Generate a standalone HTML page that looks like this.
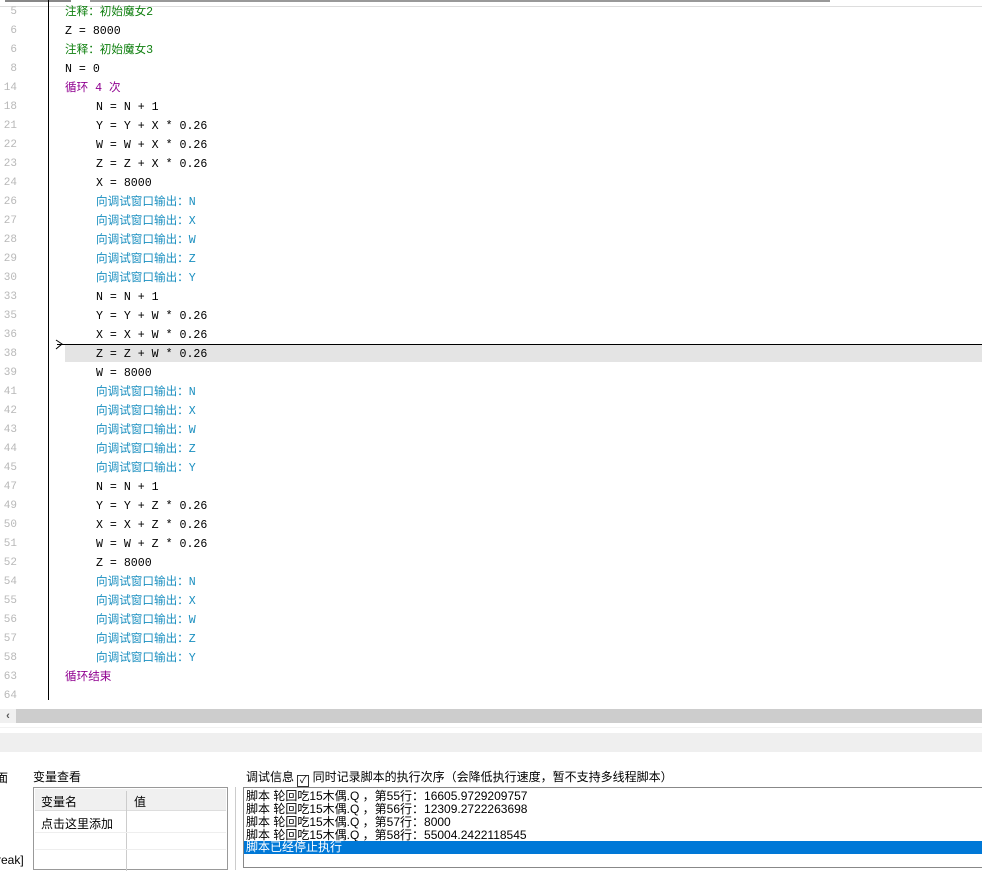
<!DOCTYPE html>
<html><head><meta charset="utf-8"><style>
*{margin:0;padding:0;box-sizing:border-box}
body{width:982px;height:870px;background:#fff;position:relative;overflow:hidden;font-family:"Liberation Sans","Noto Sans CJK SC",sans-serif}
.ln{position:absolute;left:0;width:17px;text-align:right;font:11px "Liberation Mono","Noto Sans CJK SC",monospace;color:#b8b8b8;height:19px;line-height:19px}
.c{position:absolute;font:11.6px "Liberation Mono","Noto Sans CJK SC",monospace;height:19px;line-height:19px;color:#000;white-space:pre}
.g{color:#108010}.p{color:#900090}.b{color:#1a8fc0}
.abs{position:absolute}
.t{font-size:12px;line-height:13px;white-space:pre}
</style></head><body>
<div class="abs" style="left:5px;top:0;width:66px;height:2px;background:#888"></div>
<div class="abs" style="left:90px;top:0;width:740px;height:2px;background:#999"></div>
<div class="abs" style="left:0;top:6px;width:982px;height:1px;background:#ddd"></div>
<div class="abs" style="left:65px;top:344px;width:917px;height:18px;background:#e4e4e4"></div>
<div class="abs" style="left:57px;top:344px;width:925px;height:1px;background:#000"></div>
<svg class="abs" style="left:55px;top:339px" width="10" height="12"><path d="M1 1 L7 5 L1 10" fill="none" stroke="#000" stroke-width="1"/></svg>
<div class="abs" style="left:48px;top:0;width:1px;height:700px;background:#000"></div>
<div id="code"></div>
<div class="abs" style="left:0;top:709px;width:982px;height:14px;background:#cdcdcd"></div>
<div class="abs" style="left:0;top:709px;width:16px;height:14px;background:#f0f0f0;font-size:11px;line-height:14px;text-align:center;color:#555;font-weight:bold">&lsaquo;</div>
<div class="abs" style="left:0;top:727px;width:982px;height:1px;background:#f2f2f2"></div>
<div class="abs" style="left:0;top:733px;width:982px;height:19px;background:#efefef"></div>
<div class="abs" style="left:-4px;top:769px;font-size:12px">面</div>
<div class="abs" style="left:-3px;top:853px;font-size:12px">reak]</div>
<div class="abs" style="left:33px;top:768px;font-size:12px">变量查看</div>
<div class="abs" style="left:33px;top:787px;width:195px;height:83px;border:1px solid #999;background:#fff">
 <div class="abs" style="left:1px;top:1px;width:191px;height:22px;background:#f0f0f0;border-bottom:1px solid #ddd"></div>
 <div class="abs" style="left:92px;top:3px;width:1px;height:80px;background:#ccc"></div>
 <div class="abs" style="left:7px;top:5px;font-size:12px">变量名</div>
 <div class="abs" style="left:100px;top:5px;font-size:12px">值</div>
 <div class="abs" style="left:7px;top:27px;font-size:12px">点击这里添加</div>
 <div class="abs" style="left:1px;top:44px;width:191px;height:1px;background:#eee"></div>
 <div class="abs" style="left:1px;top:61px;width:191px;height:1px;background:#eee"></div>
</div>
<div class="abs" style="left:235px;top:787px;width:1px;height:83px;background:#ccc"></div>
<div class="abs" style="left:246px;top:768px;font-size:12px;white-space:nowrap">调试信息 <span style="display:inline-block;width:12px;height:12px;border:1px solid #333;vertical-align:-2px;font-size:10px;line-height:10px;text-align:center">✓</span> 同时记录脚本的执行次序（会降低执行速度，暂不支持多线程脚本）</div>
<div class="abs" style="left:243px;top:787px;width:740px;height:81px;border:1px solid #888;background:#fff">
 <div class="abs t" style="left:2px;top:2px">脚本 轮回吃15木偶.Q ，第55行：16605.9729209757</div>
 <div class="abs t" style="left:2px;top:15px">脚本 轮回吃15木偶.Q ，第56行：12309.2722263698</div>
 <div class="abs t" style="left:2px;top:28px">脚本 轮回吃15木偶.Q ，第57行：8000</div>
 <div class="abs t" style="left:2px;top:41px">脚本 轮回吃15木偶.Q ，第58行：55004.2422118545</div>
 <div class="abs t" style="left:0;top:53px;width:740px;height:13px;background:#0078d7;color:#fff;padding-left:2px">脚本已经停止执行</div>
</div>
<script>
var L=[["5","注释：初始魔女2","g",0],["6","Z = 8000","",0],["6","注释：初始魔女3","g",0],["8","N = 0","",0],["14","循环 4 次","p",0],
["18","N = N + 1","",1],["21","Y = Y + X * 0.26","",1],["22","W = W + X * 0.26","",1],["23","Z = Z + X * 0.26","",1],["24","X = 8000","",1],
["26","向调试窗口输出：N","b",1],["27","向调试窗口输出：X","b",1],["28","向调试窗口输出：W","b",1],["29","向调试窗口输出：Z","b",1],["30","向调试窗口输出：Y","b",1],
["33","N = N + 1","",1],["35","Y = Y + W * 0.26","",1],["36","X = X + W * 0.26","",1],["38","Z = Z + W * 0.26","",1],["39","W = 8000","",1],
["41","向调试窗口输出：N","b",1],["42","向调试窗口输出：X","b",1],["43","向调试窗口输出：W","b",1],["44","向调试窗口输出：Z","b",1],["45","向调试窗口输出：Y","b",1],
["47","N = N + 1","",1],["49","Y = Y + Z * 0.26","",1],["50","X = X + Z * 0.26","",1],["51","W = W + Z * 0.26","",1],["52","Z = 8000","",1],
["54","向调试窗口输出：N","b",1],["55","向调试窗口输出：X","b",1],["56","向调试窗口输出：W","b",1],["57","向调试窗口输出：Z","b",1],["58","向调试窗口输出：Y","b",1],
["63","循环结束","p",0],["64","","",0]];
var h="";L.forEach(function(r,i){var t=3+19*i;h+='<div class="ln" style="top:'+t+'px">'+r[0]+'</div><div class="c '+r[2]+'" style="top:'+t+'px;left:'+(r[3]?96:65)+'px">'+r[1]+'</div>';});
document.getElementById("code").innerHTML=h;
</script>
</body></html>
